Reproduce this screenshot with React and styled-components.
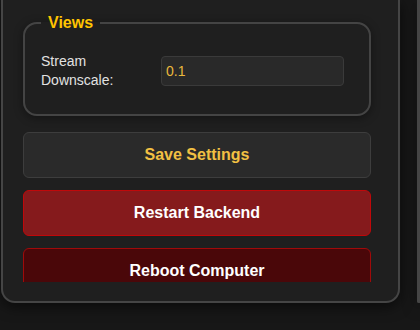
import { useState } from 'react';
import { styled, createGlobalStyle } from 'styled-components';

const GlobalStyle = createGlobalStyle`
  html, body {
    margin: 0;
    padding: 0;
    background: #171717;
    font-family: "Liberation Sans", Arial, sans-serif;
    overflow: hidden;
  }
`;

const Board = styled.div`
  display: flex;
  gap: 17px;
  padding-left: 1px;
  height: 330px;
  box-sizing: border-box;
  overflow: hidden;
`;

const Panel = styled.div`
  flex: ${(p) => (p.$width ? `0 0 ${p.$width}px` : '1 1 0')};
  min-width: 0;
  box-sizing: border-box;
  height: 303px;
  background: #1f1f1f;
  border: 2px solid #454545;
  border-top: none;
  border-radius: 0 0 14px 14px;
  box-shadow: 0 4px 14px rgba(0, 0, 0, 0.55);
  padding-bottom: 19px;
  display: flex;
  flex-direction: column;
`;

const ScrollArea = styled.div`
  flex: 1;
  overflow: hidden;
  display: flex;
  flex-direction: column;
  gap: 12px;
  padding: 13px 27px 0 20px;
`;

const Group = styled.fieldset`
  margin: 0 0 4px;
  border: 2px solid #444;
  border-radius: 14px;
  padding: 20px 16px 24px;
  box-shadow: 0 2px 10px rgba(0, 0, 0, 0.4);
`;

const Legend = styled.legend`
  padding: 0 7px;
  font-size: 16px;
  line-height: 19px;
  font-weight: bold;
  color: #ffc400;
`;

const FieldRow = styled.div`
  display: grid;
  grid-template-columns: 120px 1fr;
  align-items: center;
  padding-right: 9px;
`;

const Label = styled.label`
  font-size: 14px;
  line-height: 19px;
  color: #e2e2e2;
`;

const Input = styled.input`
  box-sizing: border-box;
  height: 30px;
  width: 100%;
  background: #292929;
  border: 1px solid #3a3a3a;
  border-radius: 4px;
  color: #e9b83c;
  font-family: "Liberation Sans", Arial, sans-serif;
  font-size: 14px;
  padding: 0 4px;
  outline: none;
`;

const variants = {
  neutral: { bg: '#2a2a2a', border: '#3d3d3d', color: '#f2c043' },
  danger: { bg: '#851a1c', border: '#c0080a', color: '#ffffff' },
  critical: { bg: '#4a0709', border: '#a00a0a', color: '#ffffff' },
};

const ActionButton = styled.button`
  flex: 0 0 auto;
  height: 46px;
  width: 100%;
  background: ${(p) => variants[p.$variant].bg};
  border: 1px solid ${(p) => variants[p.$variant].border};
  border-radius: 6px;
  color: ${(p) => variants[p.$variant].color};
  font-family: "Liberation Sans", Arial, sans-serif;
  font-size: 16px;
  font-weight: bold;
  cursor: pointer;
`;

export default function App() {
  const [downscale, setDownscale] = useState('0.1');

  return (
    <>
      <GlobalStyle />
      <Board>
        <Panel $width={399}>
          <ScrollArea>
            <Group>
              <Legend>Views</Legend>
              <FieldRow>
                <Label htmlFor="downscale">
                  Stream
                  <br />
                  Downscale:
                </Label>
                <Input
                  id="downscale"
                  value={downscale}
                  onChange={(e) => setDownscale(e.target.value)}
                />
              </FieldRow>
            </Group>
            <ActionButton $variant="neutral">Save Settings</ActionButton>
            <ActionButton $variant="danger">Restart Backend</ActionButton>
            <ActionButton $variant="critical">Reboot Computer</ActionButton>
          </ScrollArea>
        </Panel>
        <Panel />
      </Board>
    </>
  );
}
